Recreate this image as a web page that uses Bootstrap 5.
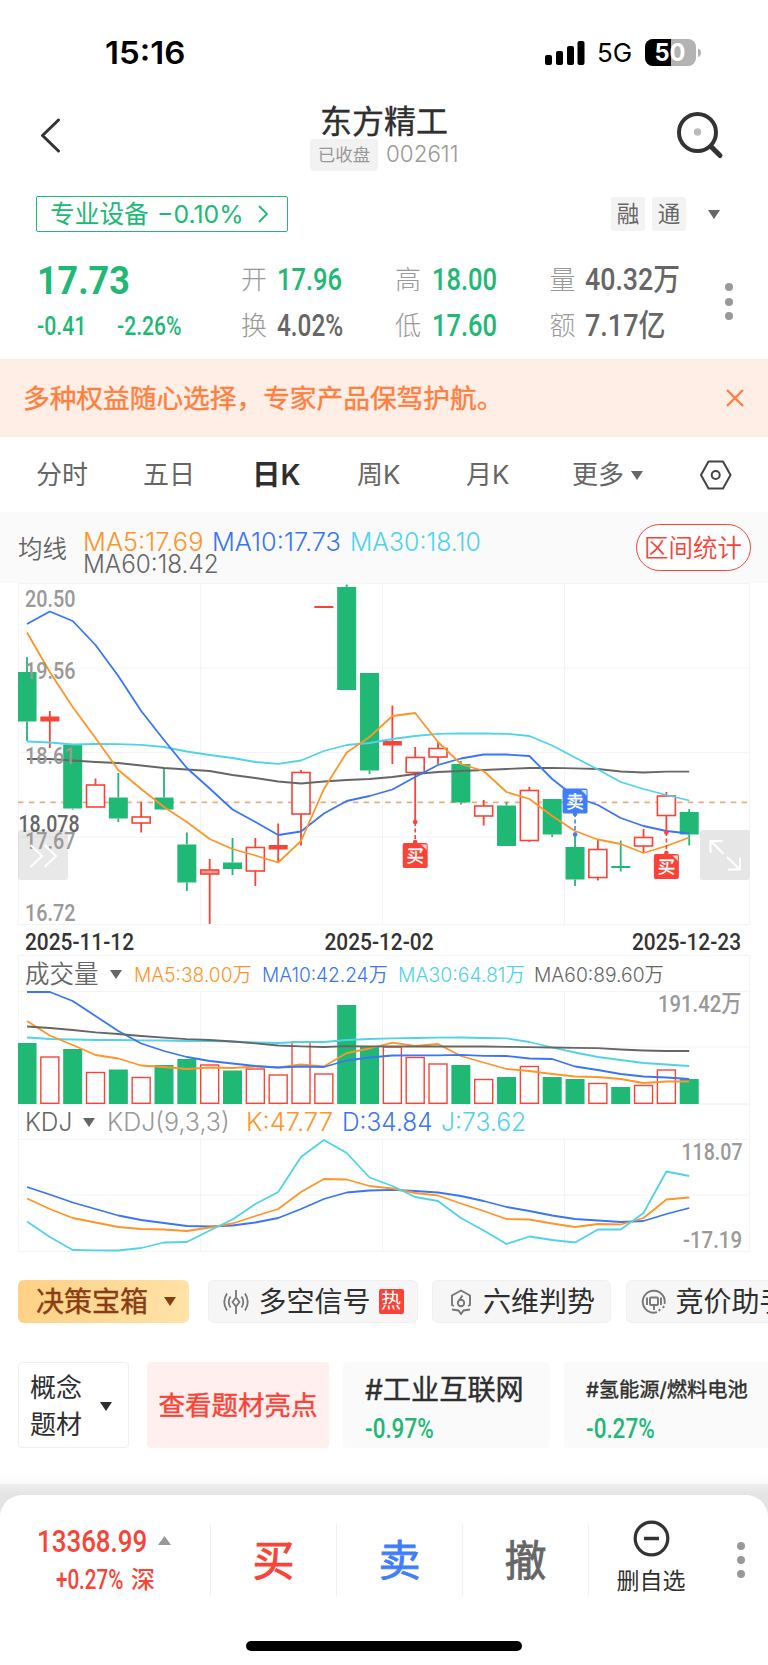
<!DOCTYPE html>
<html lang="zh-CN">
<head>
<meta charset="utf-8">
<meta name="viewport" content="width=device-width, initial-scale=1">
<title>东方精工 002611</title>
<link href="https://cdn.jsdelivr.net/npm/bootstrap@5.3.0/dist/css/bootstrap.min.css" rel="stylesheet">
<style>
  :root { --up:#f94336; --down:#20b875; --ink:#2f2f2f; --mid:#666; --soft:#999; --o:#ff9429; --b:#3a75f5; --c:#4fd3e8; }
  body { width:768px; height:1665px; margin:0; background:#fff; color:var(--ink); overflow:hidden;
    font-family:"Inter","Noto Sans CJK SC",sans-serif; line-height:1; }
  svg { display:block; }
  .din { font-family:"Roboto","Noto Sans CJK SC",sans-serif; font-weight:500; }
  .fit { display:inline-block; white-space:nowrap; }
  .fit > span { display:inline-block; transform-origin:0 50%; }
  .up { color:var(--up); } .down { color:var(--down); } .mid { color:var(--mid); } .soft { color:var(--soft); }
  .ma5 { color:var(--o); } .ma10 { color:var(--b); } .ma30 { color:var(--c); }
  .cjk-md { -webkit-text-stroke:.4px currentColor; }
  .line { display:grid; align-items:center; white-space:nowrap; }
  .tri { width:0; height:0; border:6.5px solid transparent; border-top:9px solid currentColor; border-bottom:0; }

  .status { height:90px; grid-template-columns:105px 440px 52px 48px 60px; padding-top:15px; }
  .clock { font-size:31px; font-weight:600; }
  .head { height:90px; grid-template-columns:38px 272px 188px 178px 60px; }
  .stock-name { font-size:32px; line-height:34px; text-align:center; width:148px; padding-top:5px; }
  .closed { width:68px; height:32px; background:#f2f2f2; border-radius:4px; font-size:17.5px; color:var(--soft); line-height:31px; text-align:center; }

  .sector { height:68px; grid-template-columns:36px 575px 41px 56px 30px; }
  .sector-link { width:252px; height:36px; border:1.6px solid var(--down); border-radius:2px; display:grid; grid-template-columns:13px 107px 100px 14px; align-items:center; }
  .tagbox { width:34px; height:34px; background:#f3f3f3; border-radius:3px; font-size:22.5px; line-height:33px; text-align:center; color:var(--mid); }
  .quote { height:111px; grid-template-columns:37px 80px 124px 36px 118px 36.5px 118px 35.5px 140px 30px; grid-template-rows:63px 29px; }
  .quote .lab { font-size:26px; color:var(--soft); font-weight:300; }
  .quote .val { font-size:31px; }
  .quote .dots { grid-column:10; grid-row:1 / span 2; margin-top:15px; margin-left:-.5px; }
  .dots { width:8px; display:grid; gap:6.3px; }
  .dots i { width:8px; height:8px; border-radius:50%; background:#999; }

  .promo { height:78px; background:#feeee6; color:#ff7f3e; padding:0 23px; font-size:26.7px; }
  .tabs { height:75px; grid-template-columns:36px 107px 109px 105px 109px 106px 59px 69px 34px; font-size:26px; color:var(--mid); padding-top:1px; }
  .tabs .on { font-size:28.5px; color:var(--ink); font-weight:600; }
  .mabar { height:71px; background:#fafafa; grid-template-columns:18px 64.5px 129px 138px 286px 115px; grid-template-rows:21.5px 21.5px; align-content:center; font-size:25px; font-weight:350; }
  .mabar .fit { position:relative; top:6px; }
  .stat-btn { width:115px; height:47px; border:1.4px solid var(--up); border-radius:24px; color:var(--up); font-size:24.5px; line-height:46px; text-align:center; background:#fff; }
  .frame { margin-left:18px; width:732px; border-left:1px solid #f4f4f4; border-right:1px solid #f4f4f4; font-weight:350; }
  .vleg { height:36px; border-top:1px solid #f4f4f4; grid-template-columns:6px 85px 24px 128px 136px 136px 140px; font-size:20px; padding-top:2px; }
  .kleg { height:35px; border-top:1px solid #f4f4f4; grid-template-columns:6px 58px 24px 139px 96px 99px 90px; font-size:25px; }

  .chips { margin-top:27px; padding-left:18px; gap:14.5px; white-space:nowrap; overflow:hidden; }
  .chip { height:43px; background:#f6f6f6; border:1.5px solid #f0f0f0; border-radius:6px; font-size:28px; flex:none; display:flex; align-items:center; }
  .chip.gold { width:171px; margin-right:4px; border:0; background:linear-gradient(110deg,#ffd084,#ffe3a9); color:#8a3d12; padding-left:18px; gap:15.5px; }
  .hot { width:25px; height:25px; background:var(--up); color:#fff; font-size:20px; line-height:25px; text-align:center; border-radius:2px; }
  .themes { margin-top:39px; height:86px; padding-left:18px; white-space:nowrap; overflow:hidden; }
  .box { height:86px; flex:none; border-radius:4px; background:#fafafa; display:flex; }
  .box-sel { width:111px; background:#fff; border:1.5px solid #f0f0f0; font-size:26px; line-height:37.5px; margin-right:18px; padding:2px 0 0 11px; gap:18px; }
  .box-hot { width:182px; background:#fff0ef; color:var(--up); font-size:26.5px; margin-right:14px; }
  .box-t { padding:12px 0 0 21.5px; flex-direction:column; }
  .box-t .ttl { height:32px; line-height:32px; }
  .box-t .din { font-size:27px; margin-top:9px; line-height:28px; }
  .shade { margin-top:22px; height:25px; background:linear-gradient(#fff,#fafafa 55%,#eee 56%,#e3e3e3); }
  .shade-under { background:#e4e4e4; }
  .dock { position:relative; height:170px; background:#fff; border-radius:22px 22px 0 0; grid-template-columns:209.5px 126px 126px 126px 126px 54px; grid-template-rows:72px; align-content:start; padding-top:29px; }
  .dock > div { height:72px; }
  .dock .act { border-left:1.5px solid #f0f0f0; font-size:42px; line-height:74px; text-align:center; -webkit-text-stroke:.8px currentColor; padding-left:1px; }
  .dock .homebar { position:absolute; left:246px; bottom:14px; width:276px; height:10px; border-radius:5px; background:#000; }
</style>
</head>
<body>
<div class="line status">
  <span></span>
  <span class="clock text-black fit" data-w="80">15:16</span>
  <svg width="40" height="26" fill="#000"><rect x="0" y="15" width="7" height="10" rx="2"/><rect x="11" y="11" width="7" height="14" rx="2"/><rect x="22" y="6" width="7" height="19" rx="2"/><rect x="32.500" y="1" width="7" height="24" rx="2"/></svg>
  <span class="fit text-black" data-w="35" style="font-size:26px">5G</span>
  <svg width="57" height="28"><defs><clipPath id="bat"><rect width="51" height="27" rx="8"/></clipPath></defs><g clip-path="url(#bat)"><rect width="51" height="27" fill="#b3b3b3"/><rect width="26" height="27"/></g><path d="M53 9.500q3 1 3 4.300t-3 4.300z" fill="#b3b3b3"/><text x="9.500" y="22" font-size="24" font-weight="700" fill="#fff" textLength="31" lengthAdjust="spacingAndGlyphs">50</text></svg>
</div>

<div class="line head">
  <span></span>
  <svg width="24" height="36" fill="none" stroke="#333" stroke-width="3" stroke-linecap="round" stroke-linejoin="round"><path d="M20.500 3L4.500 18.500L20.500 34"/></svg>
  <div>
    <div class="stock-name cjk-md">东方精工</div>
    <div class="d-flex align-items-center"><span class="closed me-2">已收盘</span><span class="fit soft" data-w="72" style="font-size:23px;font-weight:300">002611</span></div>
  </div>
  <span></span>
  <svg width="50" height="50" fill="none" stroke="#333"><circle cx="21.500" cy="22.500" r="18.500" stroke-width="4"/><path d="M35.500 37L44 45.500" stroke-width="5" stroke-linecap="round"/><circle cx="21.500" cy="22" r="3.700" fill="#bbb" stroke="none"/></svg>
</div>

<div class="line sector">
  <span></span>
  <div class="sector-link down"><span></span><span style="font-size:24.700px">专业设备</span><span class="fit" data-w="86" style="font-size:24.500px">−0.10%</span><svg width="12" height="18" fill="none" stroke="#20b875" stroke-width="1.800"><path d="M2 1L10 9L2 17"/></svg></div>
  <span class="tagbox">融</span><span class="tagbox">通</span><i class="tri mid"></i>
</div>

<div class="line quote din">
  <span></span><span class="fit down pt-1" data-w="93" style="font-size:39px;font-weight:700">17.73</span><span></span><span class="lab">开</span><span class="fit val down" data-w="65">17.96</span><span class="lab">高</span><span class="fit val down" data-w="65">18.00</span><span class="lab">量</span><span class="fit val mid" data-w="95">40.32万</span>
  <div class="dots"><i></i><i></i><i></i></div>
  <span></span><span class="fit down" data-w="49" style="font-size:26px">-0.41</span><span class="fit down" data-w="65" style="font-size:26px">-2.26%</span><span class="lab">换</span><span class="fit val mid" data-w="66">4.02%</span><span class="lab">低</span><span class="fit val down" data-w="65">17.60</span><span class="lab">额</span><span class="fit val mid" data-w="80">7.17亿</span>
</div>

<div class="promo d-flex align-items-center justify-content-between">
  <span class="cjk-md">多种权益随心选择，专家产品保驾护航。</span>
  <svg width="20" height="20" fill="none" stroke="#ff7f3e" stroke-width="2.400"><path d="M2 2L18 18M18 2L2 18"/></svg>
</div>

<div class="line tabs">
  <span></span><span>分时</span><span>五日</span><span class="on">日K</span><span>周K</span><span>月K</span><span>更多</span><i class="tri mid"></i>
  <svg width="32" height="30" fill="none" stroke="#444" stroke-width="2"><path d="M8.500 1.500h14.500l7.500 13.500l-7.500 13.500H8.500L1 15z" stroke-linejoin="round"/><circle cx="15.700" cy="15" r="4"/></svg>
</div>

<div class="line mabar">
  <span></span><span class="mid pt-1" style="grid-row:span 2;font-size:24.500px">均线</span>
  <span class="fit ma5" data-w="120">MA5:17.69</span><span class="fit ma10" data-w="129">MA10:17.73</span><span class="fit ma30" data-w="131">MA30:18.10</span>
  <span class="stat-btn" style="grid-row:span 2">区间统计</span>
  <span class="fit mid" data-w="136" style="grid-column:3">MA60:18.42</span>
</div>

<svg id="price" width="768" height="372" viewBox="0 583 768 372"></svg>

<div class="frame line vleg">
  <span></span><span class="mid" style="font-size:24.500px">成交量</span><i class="tri mid"></i>
  <span class="fit ma5" data-w="118">MA5:38.00万</span><span class="fit ma10" data-w="126">MA10:42.24万</span><span class="fit ma30" data-w="127">MA30:64.81万</span><span class="fit mid" data-w="130">MA60:89.60万</span>
</div>
<svg id="vol" width="768" height="113" viewBox="0 991 768 113"></svg>

<div class="frame line kleg">
  <span></span><span class="fit mid" data-w="47">KDJ</span><i class="tri mid"></i>
  <span class="fit soft" data-w="123" style="font-weight:300">KDJ(9,3,3)</span><span class="fit ma5" data-w="87">K:47.77</span><span class="fit ma10" data-w="91">D:34.84</span><span class="fit ma30" data-w="85">J:73.62</span>
</div>
<svg id="kdj" width="768" height="114" viewBox="0 1139 768 114"></svg>

<div class="d-flex chips">
  <div class="chip gold"><span class="cjk-md">决策宝箱</span><i class="tri"></i></div>
  <div class="chip" style="width:210px">
    <svg style="margin:0 10px 0 14px" width="26" height="26" fill="none" stroke="#777" stroke-width="1.800"><path d="M13 1v7M13 18v7M13 8.500l3.500 4.500l-3.500 4.500l-3.500-4.500zM7.500 7.500q-3.500 5.500 0 11M18.500 7.500q3.500 5.500 0 11M4 4.500q-5.500 8.500 0 17M22 4.500q5.500 8.500 0 17"/></svg>
    <span>多空信号</span><span class="hot ms-2">热</span></div>
  <div class="chip" style="width:179px">
    <svg style="margin:0 11px 0 17px" width="22" height="26" fill="none" stroke="#777" stroke-width="1.900"><path d="M4 17L2 16V6.500L11 1.500L20 6.500V16L18 17M2 20.500L8.500 21.500L11 25L13.500 21.500L20 20.500"/><path d="M12.500 6.500L9 11.500"/><circle cx="11" cy="14" r="3.200"/></svg>
    <span>六维判势</span></div>
  <div class="chip" style="width:190px">
    <svg style="margin:0 9px 0 14px" width="26" height="26" fill="none" stroke="#777" stroke-width="1.900"><path d="M16 23.200A11 11 0 1 1 23.500 15"/><rect x="9" y="8.500" width="8" height="7.500" rx="1"/><path d="M13 16v5M6 8.500v7.500M20 8.500v7.500M18 22l1-2M22 19l1-2"/></svg>
    <span>竞价助手</span></div>
</div>

<div class="d-flex themes">
  <div class="box box-sel align-items-center"><span>概念<br>题材</span><i class="tri"></i></div>
  <div class="box box-hot align-items-center justify-content-center"><span class="cjk-md">查看题材亮点</span></div>
  <div class="box box-t" style="width:207px;margin-right:14px"><span class="ttl cjk-md fit" data-w="159" style="font-size:28px">#工业互联网</span><span class="fit din down" data-w="69">-0.97%</span></div>
  <div class="box box-t" style="width:230px"><span class="ttl fit cjk-md" data-w="162" style="font-size:20px">#氢能源/燃料电池</span><span class="fit din down" data-w="69">-0.27%</span></div>
</div>

<div class="shade"></div>
<div class="shade-under">
<div class="line dock">
  <div class="din up" style="padding-left:37px">
    <div class="d-flex align-items-center" style="height:33px"><span class="fit" data-w="110" style="font-size:32px">13368.99</span><svg class="ms-2" width="20" height="10"><path d="M3 9L9.500 0L16 9z" fill="#999"/></svg></div>
    <div class="d-flex align-items-center" style="height:30px;margin:8px 0 0 19px"><span class="fit" data-w="67" style="font-size:27px">+0.27%</span><span class="ms-2" style="font-size:24px">深</span></div>
  </div>
  <div class="act up">买</div><div class="act" style="color:#3f7dfb">卖</div><div class="act mid">撤</div>
  <div style="border-left:1.5px solid #f0f0f0">
    <svg style="margin:-4px auto 0 44px" width="38" height="38" fill="none" stroke="#333"><circle cx="18.500" cy="18.500" r="16.300" stroke-width="3.200"/><path d="M11 18.500h15" stroke-width="3.500"/></svg>
    <div style="font-size:23px;margin:12px 0 0 28px">删自选</div>
  </div>
  <div class="dots" style="margin:35px 0 0 23px;align-content:start"><i></i><i></i><i></i></div>
  <div class="homebar"></div>
</div>
</div>

<script src="https://cdn.jsdelivr.net/npm/bootstrap@5.3.0/dist/js/bootstrap.bundle.min.js"></script>
<script>
const UP='#f94336', DN='#20b875', O='#ff9429', B='#3a75f5', C='#4fd3e8', G='#666';
const X=i=>27+22.835*i;
const grid=(t,ys,b)=>[18.5,200.5,382.5,564.5,749.5].map(x=>`<path d="M${x} ${t}V${b}" stroke="#f4f4f4"/>`).join('')+ys.map(y=>`<path d="M18 ${y}H750" stroke="#f4f4f4"/>`).join('');
const poly=(a,c)=>`<polyline fill="none" stroke="${c}" stroke-width="1.8" stroke-linejoin="round" points="${a.map((y,i)=>X(i).toFixed(1)+','+y).join(' ')}"/>`;
const label=(s,x,base,w,c)=>`<text x="${x}" y="${base}" font-family="Roboto,'Noto Sans CJK SC',sans-serif" font-size="24" font-weight="500" fill="${c}" textLength="${w}" lengthAdjust="spacingAndGlyphs">${s}</text>`;

// kind, high, body top, body bottom, low
const K=[['g',657,672,721.5,741],['f',711,717,721,748],['g',744,744.5,808.5,809.5],['r',778.5,785,807,807],['g',773,797.5,818.5,822],['r',802,817,823,832.5],['g',768,797.5,809.5,810],['g',832.5,844.5,882.5,891],['r',859,870,874,924],['g',838,862.5,869,875],['r',838,847.5,871,886],['f',823.5,845.5,849,863],['r',770,772.5,814,845.5],['f',606,606.5,607.5,608],['g',584.5,587,690,690],['g',673,673,770.5,774],['f',705.5,741.5,745,764],['r',747,757.5,772.5,822],['r',742,748.5,757,764],['g',761,764,802.5,804.5],['r',800,806,816,825.5],['g',802,805.5,846,846],['r',787,790.5,840.5,842],['g',799,799,834.5,837],['g',834,847,879.5,886],['r',839,849.5,877.5,880.5],['g',840.5,866,868,871.5],['r',829,837.5,846,853],['r',792,796,815.5,832],['g',809,812,834.5,845.5]];
let s=grid(583,[583.5,668,752.5,837,924.5],924.5);
s+='<path d="M18 802.300H750" stroke="#efab7d" stroke-width="1.700" stroke-dasharray="5.500 5.300"/>';
K.forEach(([k,h,t,b,l],i)=>{const x=X(i),c=k=='g'?DN:UP,x0=i?x-9.5:18,w=x+9.5-x0;
  s+=`<path d="M${x} ${h}V${t}M${x} ${b}V${l}" stroke="${c}" stroke-width="1.8"/>`;
  s+=k=='r'?`<rect x="${x-9}" y="${t}" width="18" height="${b-t}" fill="${i==8?'#fba19a':'#fff'}" stroke="${c}" stroke-width="1.6"/>`
    :`<rect x="${x0}" y="${t-(k=='f'?.5:0)}" width="${w}" height="${b-t+(k=='f'?1:0)}" fill="${c}"/>`;});
s+=poly([759,759,760.5,762,763,765.5,768,769.5,771,775,778,781.5,783.5,781.5,780,779,777,774,772,771,770,769,768,767.8,768.3,769,771.5,772.5,771.7,771.7],G);
s+=poly([741.5,742.5,744.5,744,744.2,744.8,747,751.5,755,758,762,763.8,760.5,751,745,743,739,736,733.8,733.3,733.5,733.8,736,745.5,757.5,769.5,782,789,795,800.5],C);
s+=poly([624,611.5,621,645,676,711,740,768,788.5,809.5,822,835,831.5,813.5,801,796,789.5,777,765,758.5,754.5,754.5,756,779,797,805,818,826,831,833.5],B);
s+=poly([632.5,672,707,738,770,789,807,822,839,849,855.5,862.5,841,789,752.5,737,716,713,742,764,771,792,799,816,831,839.5,844,853,846,837.5],O);
const mark=(i,y,d,a,b,c,t)=>{const x=X(i);
  s+=`<path d="M${x} ${a}V${b}" stroke="${c}" stroke-width="1.6" stroke-dasharray="4 2.5"/><circle cx="${x}" cy="${d}" r="2.3" fill="${c}"/><circle cx="${x}" cy="${y<d?y+25.5:y-1}" r="2.3" fill="${c}"/><rect x="${x-12.5}" y="${y}" width="25" height="25" rx="2" fill="${c}"/><path d="M${x+6} ${y+1.5}h5.5v5.5z" fill="#fff" opacity=".8"/><text x="${x}" y="${y+19}" font-size="17.5" font-family="'Noto Sans CJK SC',sans-serif" fill="#fff" stroke="#fff" stroke-width=".3" text-anchor="middle">${t}</text>`;};
mark(17,843,822,822,843,UP,'买'); mark(24,788.5,834.5,813,834,'#3f7dfb','卖'); mark(28,854,832.5,832,854,UP,'买');
s+='<rect x="18" y="830" width="50" height="50" rx="3" fill="#000" opacity=".09"/><rect x="700" y="830" width="50" height="50" rx="3" fill="#e6e6e6"/>';
s+=label('20.50',25,606.5,50.5,'#999')+label('19.56',25,678.5,50.5,'#999')+label('18.61',25,763.5,50.5,'#999')+label('18.078',18.5,831.5,61,'#666')+label('17.67',25,848.5,50.5,'#999')+label('16.72',25,920.5,50.5,'#999');
s+='<path d="M30.500 845l11.500 11l-11.500 11M44.500 845l11.500 11l-11.500 11M711 841L723.500 854M710.500 853v-12h12M727 857L739.500 869M728 869.500H740V857.500" fill="none" stroke="#fff" stroke-width="2"/>';
s+=label('2025-11-12',25,949.5,109,'#333')+label('2025-12-02',324.5,949.5,109,'#333')+label('2025-12-23',632,949.5,109,'#333');
price.innerHTML=s;

const V=[1043,1057,1049,1072.5,1069.5,1077.5,1065,1059,1065,1070.5,1069,1075,1042,1074,1005,1047,1047,1057.5,1064,1065,1079.5,1077,1066.5,1077,1079,1083.5,1087,1085.5,1070,1079];
s=grid(991,[991.5,1047,1103.8],1104);
V.forEach((t,i)=>{const x=X(i),g=K[i][0]=='g',x0=i?x-9.5:18;
  s+=g?`<rect x="${x0}" y="${t}" width="${x+9.5-x0}" height="${1104-t}" fill="${DN}"/>`:`<rect x="${x-9}" y="${t}" width="18" height="${1103.3-t}" fill="#fff" stroke="${UP}" stroke-width="1.4"/>`;});
s+=poly([1037.5,1039,1039.5,1040,1040,1040.3,1040.5,1041,1041.2,1041.5,1042.5,1043,1042,1042,1040,1039,1038.3,1038,1037.7,1037.5,1038,1038.3,1042,1047.5,1052.5,1057,1060,1063,1064.5,1066],C);
s+=poly([1021,1035.5,1045,1055,1058.5,1065.5,1067,1069,1067.5,1068,1066.5,1067.5,1064.5,1066.5,1053,1048.5,1042.7,1046,1044,1056,1062.5,1069,1071,1074,1076.5,1077,1079,1083,1081.5,1081.5],O);
s+=poly([992,992,1001,1016,1031,1043.5,1051,1057,1061,1063.5,1066,1067.5,1066.5,1067,1060.5,1057.5,1055.5,1055.3,1055.3,1054.8,1055.8,1056,1058.5,1059,1066.5,1070,1074,1076.5,1077.5,1079],B);
s+=poly([1026.5,1028,1030,1032.3,1034,1036,1037.7,1039.2,1040,1041.5,1043.3,1045.5,1046.3,1047,1046.2,1046.3,1046.5,1046.5,1046.5,1046.5,1046.5,1046.8,1047.2,1047.5,1047.8,1048.2,1049.5,1050.5,1051,1051],G);
vol.innerHTML=s+label('191.42万',658,1012,83.5,'#999');

s=grid(1139,[1139.5,1195,1251.5],1251.5);
s+=poly([1187,1194.5,1202.5,1209,1215.5,1220,1223,1226,1226.5,1225.5,1222.5,1218,1209,1199,1192.5,1190.5,1189.8,1191,1192.5,1196,1201,1207,1211,1215.5,1219,1220.5,1222,1221,1214,1208],B);
s+=poly([1198.5,1209,1218,1222.5,1227,1229,1229.5,1231,1227.5,1223.5,1216,1209,1192,1179,1179.5,1186,1188.5,1193,1195.5,1203.5,1211,1219,1219.5,1223.5,1227,1224,1224.5,1218,1199.5,1197.5],O);
s+=poly([1221.5,1237,1250,1250.3,1250.5,1248,1242.5,1242,1230.5,1219.5,1204,1192,1157,1140,1153,1177.5,1186,1197,1201,1218,1230.5,1244,1236.5,1240,1242.5,1229.5,1229.5,1213,1171.5,1176],C);
kdj.innerHTML=s+label('118.07',681.5,1159.5,61,'#999')+label('-17.19',683,1247.5,59,'#999');

// condense each figure to the column width it is given
document.querySelectorAll('.fit').forEach(e=>{
  e.innerHTML='<span>'+e.textContent+'</span>';
  const t=e.firstChild, w=+e.dataset.w;
  t.style.transform='scaleX('+w/t.offsetWidth+')';
  t.style.marginRight=(w-t.offsetWidth)+'px';
  e.style.width=w+'px';
});
</script>
</body>
</html>
